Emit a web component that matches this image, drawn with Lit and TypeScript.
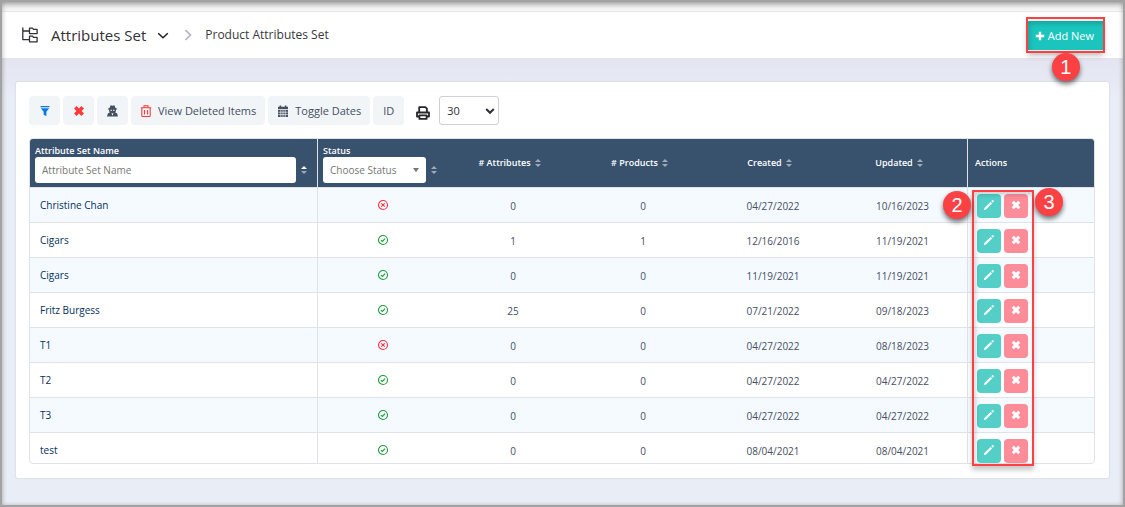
import { LitElement, html, css, svg, nothing } from "lit";
import { customElement, property } from "lit/decorators.js";

interface AttributeSet {
  name: string;
  active: boolean;
  attributes: number;
  products: number;
  created: string;
  updated: string;
}

const ROWS: AttributeSet[] = [
  { name: "Christine Chan", active: false, attributes: 0, products: 0, created: "04/27/2022", updated: "10/16/2023" },
  { name: "Cigars", active: true, attributes: 1, products: 1, created: "12/16/2016", updated: "11/19/2021" },
  { name: "Cigars", active: true, attributes: 0, products: 0, created: "11/19/2021", updated: "11/19/2021" },
  { name: "Fritz Burgess", active: true, attributes: 25, products: 0, created: "07/21/2022", updated: "09/18/2023" },
  { name: "T1", active: false, attributes: 0, products: 0, created: "04/27/2022", updated: "08/18/2023" },
  { name: "T2", active: true, attributes: 0, products: 0, created: "04/27/2022", updated: "04/27/2022" },
  { name: "T3", active: true, attributes: 0, products: 0, created: "04/27/2022", updated: "04/27/2022" },
  { name: "test", active: true, attributes: 0, products: 0, created: "08/04/2021", updated: "08/04/2021" },
];

const ICONS = {
  tree: {
    size: 16,
    box: 16,
    shape: svg`<g fill="none" stroke="currentColor" stroke-width="1.3" stroke-linejoin="round"><path d="M.8 .5V12.6H7M.8 4H7"/><path d="M7.5 1.2h3l1 1.2h3.6v4.2H7.5z"/><path d="M7.5 9.2h3l1 1.2h3.6v4.4H7.5z"/></g>`,
  },
  chevronDown: {
    size: 12,
    box: 12,
    shape: svg`<path d="M1.200 4.200 6 8.800 10.800 4.200" fill="none" stroke="currentColor" stroke-width="1.500"/>`,
  },
  chevronRight: {
    size: 12,
    box: 12,
    shape: svg`<path d="M3.500 1.200 8.500 6 3.500 10.800" fill="none" stroke="currentColor" stroke-width="1.600"/>`,
  },
  plus: {
    size: 10,
    box: 10,
    shape: svg`<path d="M3.800 .8h2.400v3h3v2.400h-3v3H3.800v-3h-3V3.800h3z" fill="currentColor"/>`,
  },
  filter: {
    size: 12,
    box: 12,
    shape: svg`<path d="M1.500 1h9v1.200h-9zM1.800 3.200h8.400L7.400 6.800v4.400L4.600 9.400V6.800z" fill="currentColor"/>`,
  },
  cross: {
    size: 12,
    box: 12,
    shape: svg`<path d="M3.600 1 6 3.400 8.400 1 11 3.600 8.600 6 11 8.400 8.400 11 6 8.600 3.600 11 1 8.400 3.400 6 1 3.600z" fill="currentColor"/>`,
  },
  crossSmall: {
    size: 12,
    box: 14,
    shape: svg`<path d="M4.400 2 7 4.500 9.600 2 12 4.400 9.500 7 12 9.600 9.600 12 7 9.500 4.400 12 2 9.600 4.500 7 2 4.400z" fill="currentColor"/>`,
  },
  agent: {
    size: 13,
    box: 14,
    shape: svg`<path d="M5 1.400 7 2l2-.6 1.200 3 1.800.6v1h-1.300v1.800L9.800 9l2.200 1.200.9 3.300H1.100l.9-3.300L4.200 9l-.9-1.200V6H2V5l1.800-.6z" fill="currentColor"/><path d="M4.800 6.200h1.700v1H4.800zm2.700 0h1.700v1H7.500zM6 9.300l1 1 1-1-.6 2.700h-.8z" fill="#f1f5f8"/>`,
  },
  trash: {
    size: 12,
    box: 12,
    shape: svg`<g fill="none" stroke="currentColor" stroke-width="1.100"><path d="M.8 2.700h10.400M4 2.600V.8h4v1.800M1.800 3v7.600q0 .9.900.9h6.600q.9 0 .9-.9V3M4.500 5v4.500M7.500 5v4.500"/></g>`,
  },
  calendar: {
    size: 12,
    box: 12,
    shape: svg`<path d="M2.600.5h1.600v1.200h3.600V.5h1.600v1.200h1.600V4H1V1.700h1.600z" fill="currentColor"/><path d="M1 4.800h10V12H1z" fill="currentColor"/><path d="M3.800 5v7M8.200 5v7M6 5v7M1.200 7.200h9.600M1.200 9.600h9.600" stroke="#f1f5f8" stroke-width=".7"/>`,
  },
  printer: {
    size: 14,
    box: 14,
    shape: svg`<g fill="none" stroke="currentColor" stroke-width="1.800" stroke-linejoin="round"><path d="M3.200 6V1.200h6.200l1.500 1.500V6"/><path d="M3.200 10.500H1V6.500h12v4h-2.200"/><path d="M3.400 9.400h7.200v3.500H3.400z"/></g>`,
  },
  selectArrow: {
    size: 10,
    box: 10,
    shape: svg`<path d="M1.200 3 5 6.800 8.800 3" fill="none" stroke="currentColor" stroke-width="2"/>`,
  },
  triangle: { size: 8, box: 8, shape: svg`<path d="M1 2h6L4 6.200z" fill="currentColor"/>` },
  pencil: {
    size: 12,
    box: 12,
    shape: svg`<path d="M.8 11.200 1.400 9 7.600 2.900l1.500 1.500L3 10.600zM8.300 2.200l.9-.9q.5-.5 1 0l.5.5q.5.5 0 1l-.9.900z" fill="currentColor"/>`,
  },
  ok: {
    size: 12,
    box: 12,
    shape: svg`<g fill="none" stroke="currentColor" stroke-width="1.100"><circle cx="6" cy="6" r="4.500"/><path d="M3.900 6.100 5.400 7.500 8.100 4.700"/></g>`,
  },
  off: {
    size: 12,
    box: 12,
    shape: svg`<g fill="none" stroke="currentColor" stroke-width="1.100"><circle cx="6" cy="6" r="4.500"/><path d="M4.300 4.300 7.700 7.700M7.700 4.300 4.300 7.700"/></g>`,
  },
};

type IconName = keyof typeof ICONS;

@customElement("ui-icon")
class UiIcon extends LitElement {
  @property() name: IconName = "plus";

  static styles = css`
    :host {
      display: inline-flex;
      flex: none;
    }
  `;

  render() {
    const { size, box, shape } = ICONS[this.name];
    return html`<svg width=${size} height=${size} viewBox="0 0 ${box} ${box}" aria-hidden="true">${shape}</svg>`;
  }
}

@customElement("sort-toggle")
class SortToggle extends LitElement {
  @property() label = "";
  @property() direction = "";

  static styles = css`
    :host {
      display: inline-flex;
      flex: none;
    }
    .sort {
      display: flex;
      padding: 0;
      border: 0;
      background: none;
      color: #9daab9;
      cursor: pointer;
    }
    .up {
      color: #ffffff;
    }
  `;

  render() {
    return html`<button class="sort" type="button" aria-label="Sort by ${this.label}">
      <svg width="6" height="10" viewBox="0 0 6 10" aria-hidden="true">
        <path class=${this.direction === "asc" ? "up" : nothing} d="M0 4 3 1l3 3z" fill="currentColor" />
        <path d="M0 6h6L3 9z" fill="currentColor" />
      </svg>
    </button>`;
  }
}

@customElement("app-root")
class AppRoot extends LitElement {
  static styles = css`
    :host {
      display: block;
      padding-bottom: 1px;
      background: #e8eae8;
      color: #464e5f;
      font-family: "Open Sans", sans-serif;
      font-size: 12px;
      line-height: 16px;
    }
    * {
      box-sizing: border-box;
    }
    button,
    input,
    select {
      margin: 0;
      font: inherit;
      color: inherit;
    }
    button {
      cursor: pointer;
    }
    .frame {
      position: relative;
      border: 2px solid #a2a2a2;
      background: #e9edf6;
    }
    .frame::after {
      content: "";
      position: absolute;
      inset: 0;
      box-shadow: inset 0 1px 5px rgba(0, 0, 0, 0.32);
      pointer-events: none;
    }
    .strip {
      height: 10px;
      border-bottom: 1px solid #e6e6e6;
      background: linear-gradient(#d6d6d6, #fafafa);
    }
    .header {
      display: flex;
      align-items: center;
      height: 46px;
      padding: 0 20px;
      background: #ffffff;
    }
    .title {
      margin: 0 11px 0 13px;
      color: #303035;
      font-size: 15px;
      font-weight: 400;
      line-height: 24px;
    }
    .tree {
      color: #303035;
    }
    .menu {
      display: flex;
      padding: 0;
      border: 0;
      background: none;
      color: #202024;
    }
    .divider {
      margin: 0 11px 0 13px;
      color: #b2b2c8;
    }
    .crumb {
      color: #38383c;
      text-decoration: none;
    }
    .add-area {
      position: relative;
      margin-left: auto;
      box-shadow: 0 4px 6px rgba(0, 0, 0, 0.3);
      outline: 2px solid #fb4144;
      padding: 2px 0 1px;
      background: #e0efee;
    }
    .add {
      display: flex;
      align-items: center;
      gap: 3px;
      height: 29px;
      padding: 0 9px 0 7px;
      border: 0;
      background: #1bc5bd;
      box-shadow: inset 2px 3px 4px rgba(0, 0, 0, 0.16);
      color: #ffffff;
      font-size: 11px;
    }
    .badge {
      position: absolute;
      z-index: 2;
      width: 28px;
      height: 28px;
      border-radius: 50%;
      background: #fb4144;
      box-shadow: 0 3px 5px rgba(0, 0, 0, 0.55);
      color: #ffffff;
      font-family: "Liberation Sans", Arial, sans-serif;
      font-size: 20px;
      line-height: 28px;
      text-align: center;
    }
    .badge-add {
      top: 34px;
      left: 24px;
    }
    .body {
      padding: 24px 14px 27px;
      background: linear-gradient(#e3e4ef, #e9edf6 40px);
    }
    .card {
      padding: 14px 14px 14px 13px;
      border-radius: 2px;
      background: #ffffff;
      box-shadow: 0 0 2px rgba(80, 90, 110, 0.25);
    }
    .toolbar {
      display: flex;
      align-items: center;
      gap: 3px;
      margin-bottom: 13px;
    }
    .tool {
      display: flex;
      align-items: center;
      justify-content: center;
      gap: 6px;
      min-width: 31px;
      height: 29px;
      padding: 0 9px;
      border: 0;
      border-radius: 4px;
      background: #f1f5f8;
      font-size: 11px;
    }
    .blue {
      color: #0b78e3;
    }
    .red {
      color: #fb3a3a;
    }
    .print {
      display: flex;
      padding: 5px 6px 0 9px;
      border: 0;
      background: none;
      color: #26262a;
    }
    .select {
      display: grid;
      align-items: center;
    }
    .select select,
    .select ui-icon {
      grid-area: 1 / 1;
    }
    .select ui-icon {
      justify-self: end;
      pointer-events: none;
    }
    .select select {
      appearance: none;
      width: 100%;
      height: 100%;
    }
    .size {
      width: 60px;
      height: 29px;
      color: #303035;
      font-size: 11px;
    }
    .size select {
      padding: 0 7px;
      border: 1px solid #d0d0d4;
      border-radius: 3px;
      background: #ffffff;
    }
    .size ui-icon {
      margin-right: 4px;
    }
    .table-area {
      position: relative;
    }
    .table-box {
      height: 326px;
      overflow: hidden;
      border: 1px solid #dfe3e8;
      border-radius: 4px;
    }
    table {
      width: 100%;
      border-collapse: separate;
      border-spacing: 0;
      table-layout: fixed;
      font-size: 10px;
      line-height: 14px;
    }
    .metric {
      width: 130px;
    }
    .action-col {
      width: 126px;
    }
    th {
      height: 49px;
      padding: 0 7px 0 0;
      border-bottom: 1px solid #dfe3e8;
      background: #38526e;
      color: #ffffff;
      font-size: 9px;
      font-weight: 600;
      text-align: center;
    }
    td {
      height: 35px;
      padding: 1px 0 0;
      border-bottom: 1px solid #dfe3e8;
      text-align: center;
    }
    tbody tr:nth-child(odd) {
      background: #f4faff;
    }
    .ruled {
      border-right: 1px solid #dfe3e8;
    }
    .name {
      padding: 0 10px;
      color: #06305a;
      text-align: left;
    }
    .name a {
      color: inherit;
      font-weight: 500;
      text-decoration: none;
    }
    .filter {
      padding: 0 10px 0 5px;
      text-align: left;
      vertical-align: top;
    }
    .filter label {
      display: block;
      padding-top: 5px;
      line-height: 13px;
    }
    .filter-row {
      display: flex;
      align-items: center;
      gap: 5px;
    }
    .filter input,
    .filter select {
      min-width: 0;
      height: 26px;
      padding: 0 7px;
      border: 0;
      border-radius: 3px;
      background: #ffffff;
      color: #777777;
      font-size: 10px;
      font-weight: 400;
    }
    .filter input {
      flex: 1;
    }
    .filter input::placeholder {
      color: #777777;
      opacity: 1;
    }
    .filter .select {
      flex: none;
      width: 103px;
      color: #777777;
    }
    .filter .select ui-icon {
      margin-right: 6px;
    }
    .heading {
      display: inline-flex;
      align-items: center;
      gap: 4px;
    }
    .action-head {
      padding-left: 7px;
      text-align: left;
    }
    .status {
      padding: 0;
      line-height: 0;
    }
    .ok {
      color: #1e9a3a;
    }
    .off {
      color: #f6303c;
    }
    .actions {
      display: flex;
      gap: 3px;
      padding-left: 9px;
    }
    .act {
      display: flex;
      align-items: center;
      justify-content: center;
      width: 24px;
      height: 24px;
      padding: 0 0 2px;
      border: 0;
      border-radius: 4px;
      color: #ffffff;
    }
    .edit {
      background: #54cfc7;
    }
    .remove {
      background: #fd8c99;
    }
    .outline {
      position: absolute;
      top: 52px;
      right: 61px;
      bottom: -2px;
      width: 62px;
      border: 2px solid #fb4144;
      box-shadow: 0 4px 5px rgba(0, 0, 0, 0.22), inset 2px 3px 4px rgba(0, 0, 0, 0.16);
      pointer-events: none;
    }
    .badge-edit {
      top: 53px;
      right: 124px;
    }
    .badge-remove {
      top: 50px;
      right: 32px;
    }
  `;

  private heading(label: string, ruled = false) {
    return html`<th class=${ruled ? "ruled" : ""} scope="col">
      <span class="heading">${label}<sort-toggle label=${label}></sort-toggle></span>
    </th>`;
  }

  private row(item: AttributeSet) {
    return html`<tr>
      <td class="name ruled"><a href="#">${item.name}</a></td>
      <td class="status">
        <ui-icon
          class=${item.active ? "ok" : "off"}
          name=${item.active ? "ok" : "off"}
          role="img"
          aria-label=${item.active ? "Active" : "Inactive"}
        ></ui-icon>
      </td>
      <td>${item.attributes}</td>
      <td>${item.products}</td>
      <td>${item.created}</td>
      <td class="ruled">${item.updated}</td>
      <td>
        <div class="actions">
          <button class="act edit" type="button" aria-label="Edit ${item.name}"><ui-icon name="pencil"></ui-icon></button>
          <button class="act remove" type="button" aria-label="Delete ${item.name}">
            <ui-icon name="crossSmall"></ui-icon>
          </button>
        </div>
      </td>
    </tr>`;
  }

  render() {
    return html`<div class="frame">
      <div class="strip"></div>
      <header class="header">
        <ui-icon class="tree" name="tree"></ui-icon>
        <h1 class="title">Attributes Set</h1>
        <button class="menu" type="button" aria-label="Open section menu"><ui-icon name="chevronDown"></ui-icon></button>
        <ui-icon class="divider" name="chevronRight"></ui-icon>
        <a class="crumb" href="#">Product Attributes Set</a>
        <div class="add-area">
          <button class="add" type="button"><ui-icon name="plus"></ui-icon>Add New</button>
          <span class="badge badge-add">1</span>
        </div>
      </header>
      <main class="body">
        <section class="card">
          <div class="toolbar">
            <button class="tool blue" type="button" aria-label="Filter"><ui-icon name="filter"></ui-icon></button>
            <button class="tool red" type="button" aria-label="Clear filter"><ui-icon name="cross"></ui-icon></button>
            <button class="tool" type="button" aria-label="Audit"><ui-icon name="agent"></ui-icon></button>
            <button class="tool" type="button"><ui-icon class="red" name="trash"></ui-icon>View Deleted Items</button>
            <button class="tool" type="button"><ui-icon name="calendar"></ui-icon>Toggle Dates</button>
            <button class="tool" type="button">ID</button>
            <button class="print" type="button" aria-label="Print"><ui-icon name="printer"></ui-icon></button>
            <div class="select size">
              <select aria-label="Rows per page">
                <option>30</option>
              </select>
              <ui-icon name="selectArrow"></ui-icon>
            </div>
          </div>
          <div class="table-area">
            <div class="table-box">
              <table>
                <colgroup>
                  <col />
                  <col class="metric" span="5" />
                  <col class="action-col" />
                </colgroup>
                <thead>
                  <tr>
                    <th class="filter ruled" scope="col">
                      <label for="name-filter">Attribute Set Name</label>
                      <div class="filter-row">
                        <input id="name-filter" type="text" placeholder="Attribute Set Name" />
                        <sort-toggle label="Attribute Set Name" direction="asc"></sort-toggle>
                      </div>
                    </th>
                    <th class="filter" scope="col">
                      <label for="status-filter">Status</label>
                      <div class="filter-row">
                        <div class="select">
                          <select id="status-filter">
                            <option>Choose Status</option>
                          </select>
                          <ui-icon name="triangle"></ui-icon>
                        </div>
                        <sort-toggle label="Status"></sort-toggle>
                      </div>
                    </th>
                    ${this.heading("# Attributes")} ${this.heading("# Products")} ${this.heading("Created")}
                    ${this.heading("Updated", true)}
                    <th class="action-head" scope="col">Actions</th>
                  </tr>
                </thead>
                <tbody>
                  ${ROWS.map((item) => this.row(item))}
                </tbody>
              </table>
            </div>
            <div class="outline"></div>
            <span class="badge badge-edit">2</span>
            <span class="badge badge-remove">3</span>
          </div>
        </section>
      </main>
    </div>`;
  }
}
